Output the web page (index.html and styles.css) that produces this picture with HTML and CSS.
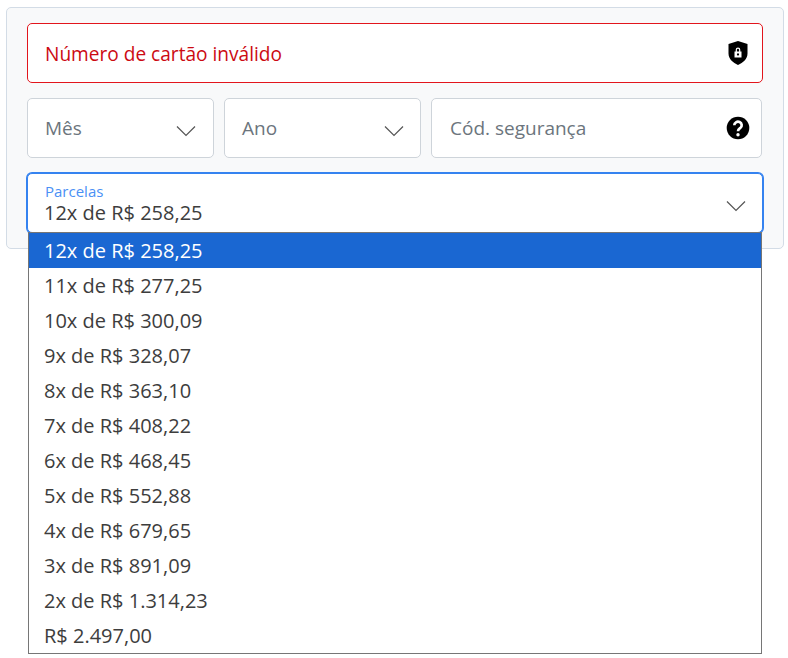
FILE: index.html
```
<!DOCTYPE html>
<html lang="pt-BR">
<head>
<meta charset="utf-8">
<title>Pagamento</title>
<link rel="stylesheet" href="styles.css">
</head>
<body>
<form class="card">
  <div class="field field-error">
    <span class="error-text">Número de cartão inválido</span>
    <svg class="icon-shield" viewBox="0 0 20 24" width="20" height="24"><path fill="#000" fill-rule="evenodd" d="M10 0 L19.500 3 V12.500 C19.500 18 15 21.500 10 24 C5 21.500 .5 18 .5 12.500 V3 Z M6.500 10.500 V16.500 H13.500 V10.500 H12.300 V8.800 A2.300 2.300 0 0 0 7.700 8.800 V10.500 Z M8.900 10.500 V8.800 A1.100 1.100 0 0 1 11.100 8.800 V10.500 Z M10 12.300 A1.100 1.100 0 1 1 9.990 12.300 Z"/></svg>
  </div>
  <div class="row">
    <div class="field select month"><span class="placeholder">Mês</span><svg class="chevron" viewBox="0 0 20 12" width="20" height="12"><path d="M1 1.500 L10 10.500 L19 1.500" fill="none" stroke="#555" stroke-width="1.200"/></svg></div>
    <div class="field select year"><span class="placeholder">Ano</span><svg class="chevron" viewBox="0 0 20 12" width="20" height="12"><path d="M1 1.500 L10 10.500 L19 1.500" fill="none" stroke="#555" stroke-width="1.200"/></svg></div>
    <div class="field cvv"><span class="placeholder">Cód. segurança</span><svg class="icon-help" viewBox="0 0 24 24" width="24" height="24"><circle cx="12" cy="12" r="11.300" fill="#000"/><path d="M8.300 9.300 A3.700 3.500 0 1 1 14.300 12 C12.900 13 12 13.500 12 15.200" fill="none" stroke="#fff" stroke-width="2.700"/><circle cx="12" cy="18.700" r="1.700" fill="#fff"/></svg></div>
  </div>
  <div class="field field-open">
    <div class="value-stack">
      <span class="float-label">Parcelas</span>
      <span class="value">12x de R$ 258,25</span>
    </div>
    <svg class="chevron" viewBox="0 0 20 12" width="20" height="12"><path d="M1 1.500 L10 10.500 L19 1.500" fill="none" stroke="#555" stroke-width="1.200"/></svg>
    <ul class="dropdown">
      <li class="selected">12x de R$ 258,25</li>
      <li>11x de R$ 277,25</li>
      <li>10x de R$ 300,09</li>
      <li>9x de R$ 328,07</li>
      <li>8x de R$ 363,10</li>
      <li>7x de R$ 408,22</li>
      <li>6x de R$ 468,45</li>
      <li>5x de R$ 552,88</li>
      <li>4x de R$ 679,65</li>
      <li>3x de R$ 891,09</li>
      <li>2x de R$ 1.314,23</li>
      <li>R$ 2.497,00</li>
    </ul>
  </div>
</form>
</body>
</html>
```

FILE: styles.css
```
* { box-sizing: border-box; }
html, body { margin: 0; padding: 0; background: #fff; }
body { font-family: "Open Sans", "Noto Sans", sans-serif; height: 658px; overflow: hidden; }
.card {
  margin: 7px 4px 0 6px;
  height: 242px;
  padding: 15px 20px;
  background: #f8f9fa;
  border: 1px solid #d3dce6;
  border-radius: 5px;
  display: flex;
  flex-direction: column;
  gap: 15px;
}
.field {
  height: 60px;
  flex: none;
  background: #fff;
  border: 1px solid #ced4da;
  border-radius: 5px;
  display: flex;
  align-items: center;
  justify-content: space-between;
  position: relative;
}
.field-error { border-color: #e2151c; padding: 0 14px 0 17px; }
.error-text { font-size: 19.1px; color: #cc0a12; margin-top: 2px; }
.icon-shield { display: block; }
.row { display: flex; gap: 10px; margin-right: 1px; }
.select { padding: 0 17px; }
.month { width: 187px; }
.year { width: 197px; padding-right: 16px; }
.cvv { flex: 1; padding: 0 11px 0 18px; }
.placeholder { font-size: 19px; color: #6c757d; }
.chevron { display: block; margin-top: 6px; }
.field-open {
  border-color: #3583f0;
  box-shadow: 0 0 0 1px #3583f0;
  padding: 0 16px 0 17px;
}
.value-stack { display: flex; flex-direction: column; gap: 1px; }
.float-label { font-size: 15px; line-height: 18px; color: #4a90f5; }
.value { font-size: 20px; line-height: 24px; color: #3d3d3d; margin-left: -1px; }
.dropdown {
  position: absolute;
  top: 58px;
  left: 0;
  width: 734px;
  margin: 0;
  padding: 0;
  list-style: none;
  background: #fff;
  border: 1px solid #767676;
  z-index: 2;
}
.dropdown li {
  height: 35px;
  line-height: 35px;
  padding-left: 15px;
  font-size: 20px;
  color: #3d3d3d;
}
.dropdown .selected { background: #1a67d2; color: #fff; }
```
